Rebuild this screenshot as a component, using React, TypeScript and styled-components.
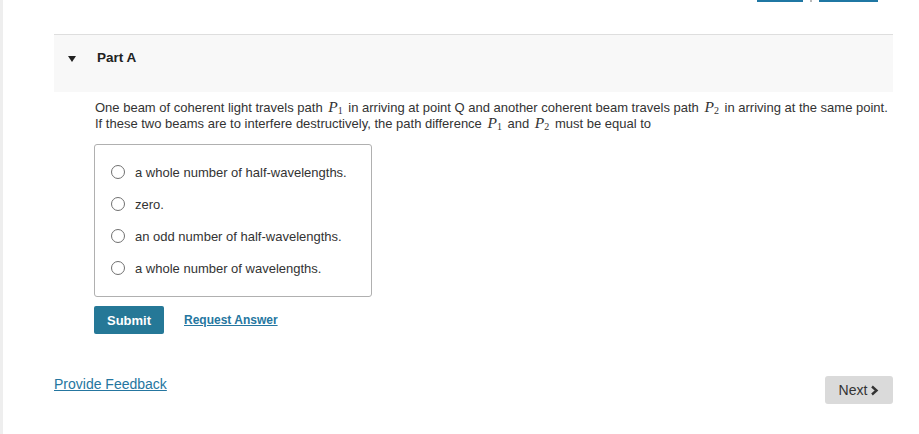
import styled, { createGlobalStyle } from "styled-components";

const GlobalStyle = createGlobalStyle`
	html, body {
		margin: 0;
		padding: 0;
		background: #fff;
	}
	body {
		font-family: "Liberation Sans", Arial, sans-serif;
		color: #333;
	}
`;

const Page = styled.div`
	min-height: 434px;
	border-left: 3px solid #eeeeee;
	box-sizing: border-box;
`;

const TopBar = styled.div`
	display: flex;
	justify-content: flex-end;
	align-items: flex-start;
	gap: 7px;
	height: 2px;
	padding-right: 41px;
`;

const TopLink = styled.span<{ $w: number }>`
	display: block;
	width: ${(p) => p.$w}px;
	height: 2px;
	background: #1f77a3;
`;

const TopSep = styled.span`
	display: block;
	width: 2px;
	height: 2px;
	background: #b8b8b8;
`;

const Part = styled.section`
	margin: 32px 26px 0 51px;
`;

const PartHeader = styled.div`
	height: 58px;
	box-sizing: border-box;
	border-top: 1px solid #dedede;
	background: #f8f8f8;
	display: flex;
	align-items: flex-start;
	padding: 15px 0 0 14px;
	gap: 21px;
`;

const Caret = styled.span`
	width: 0;
	height: 0;
	margin-top: 6px;
	border-left: 4px solid transparent;
	border-right: 4px solid transparent;
	border-top: 6px solid #222;
`;

const PartTitle = styled.h2`
	margin: 0;
	font-size: 13.5px;
	line-height: 16px;
	font-weight: bold;
	color: #222;
`;

const PartBody = styled.div`
	padding: 8px 0 0 41px;
`;

const Question = styled.p`
	margin: 0;
	font-size: 13px;
	line-height: 16px;
	color: #333;
`;

const MathVar = styled.span`
	font-family: "Liberation Serif", "DejaVu Serif", serif;
	font-style: italic;
	font-size: 15.5px;
	line-height: 0;
	margin: 0 2px;

	sub {
		font-style: normal;
		font-size: 10px;
		vertical-align: -2px;
		line-height: 0;
	}
`;

const Options = styled.div`
	margin: 12px 0 0 -1px;
	width: 278px;
	box-sizing: border-box;
	border: 1px solid #b0b0b0;
	border-radius: 3px;
	padding: 11px 0 12px 16px;
	display: flex;
	flex-direction: column;
`;

const Option = styled.label`
	display: flex;
	align-items: center;
	height: 32px;
	gap: 10px;
	font-size: 13px;
	color: #333;
`;

const Radio = styled.span`
	width: 12px;
	height: 12px;
	border: 1px solid #707070;
	border-radius: 50%;
	background: #fff;
`;

const Actions = styled.div`
	display: flex;
	align-items: center;
	gap: 20px;
	margin: 9px 0 0 -1px;
`;

const SubmitButton = styled.button`
	width: 70px;
	height: 28px;
	border: none;
	border-radius: 2px;
	background: #257897;
	color: #fff;
	font-family: "Liberation Sans", Arial, sans-serif;
	font-size: 13px;
	font-weight: bold;
	padding: 0;
`;

const TextLink = styled.a<{ $bold?: boolean; $size: number }>`
	color: #2576a0;
	text-decoration: underline;
	font-size: ${(p) => p.$size}px;
	font-weight: ${(p) => (p.$bold ? "bold" : "normal")};
	line-height: 16px;
`;

const Footer = styled.div`
	display: flex;
	justify-content: space-between;
	align-items: flex-start;
	margin: 42px 26px 0 51px;
`;

const NextButton = styled.button`
	width: 68px;
	height: 28px;
	border: none;
	border-radius: 3px;
	background: #dadada;
	color: #333;
	font-family: "Liberation Sans", Arial, sans-serif;
	font-size: 14px;
	display: flex;
	align-items: center;
	justify-content: center;
	gap: 3px;
	padding: 0;
`;

const P = ({ n }: { n: number }) => (
	<MathVar>
		P<sub>{n}</sub>
	</MathVar>
);

const options = [
	"a whole number of half-wavelengths.",
	"zero.",
	"an odd number of half-wavelengths.",
	"a whole number of wavelengths.",
];

const App = () => {
	return (
		<>
			<GlobalStyle />
			<Page>
				<TopBar>
					<TopLink $w={46} />
					<TopSep />
					<TopLink $w={59} />
				</TopBar>
				<Part>
					<PartHeader>
						<Caret />
						<PartTitle>Part A</PartTitle>
					</PartHeader>
					<PartBody>
						<Question>
							One beam of coherent light travels path <P n={1} /> in arriving at point Q and another
							coherent beam travels path <P n={2} /> in arriving at the same point.
							<br />
							If these two beams are to interfere destructively, the path difference <P n={1} /> and{" "}
							<P n={2} /> must be equal to
						</Question>
						<Options>
							{options.map((o) => (
								<Option key={o}>
									<Radio />
									{o}
								</Option>
							))}
						</Options>
						<Actions>
							<SubmitButton>Submit</SubmitButton>
							<TextLink href="#" $bold $size={12}>
								Request Answer
							</TextLink>
						</Actions>
					</PartBody>
				</Part>
				<Footer>
					<TextLink href="#" $size={14}>
						Provide Feedback
					</TextLink>
					<NextButton>
						Next
						<svg width="9" height="11" viewBox="0 0 9 11">
							<path d="M2 1.5 L6.5 5.5 L2 9.5" fill="none" stroke="#333" strokeWidth="2.4" />
						</svg>
					</NextButton>
				</Footer>
			</Page>
		</>
	);
};

export default App;
